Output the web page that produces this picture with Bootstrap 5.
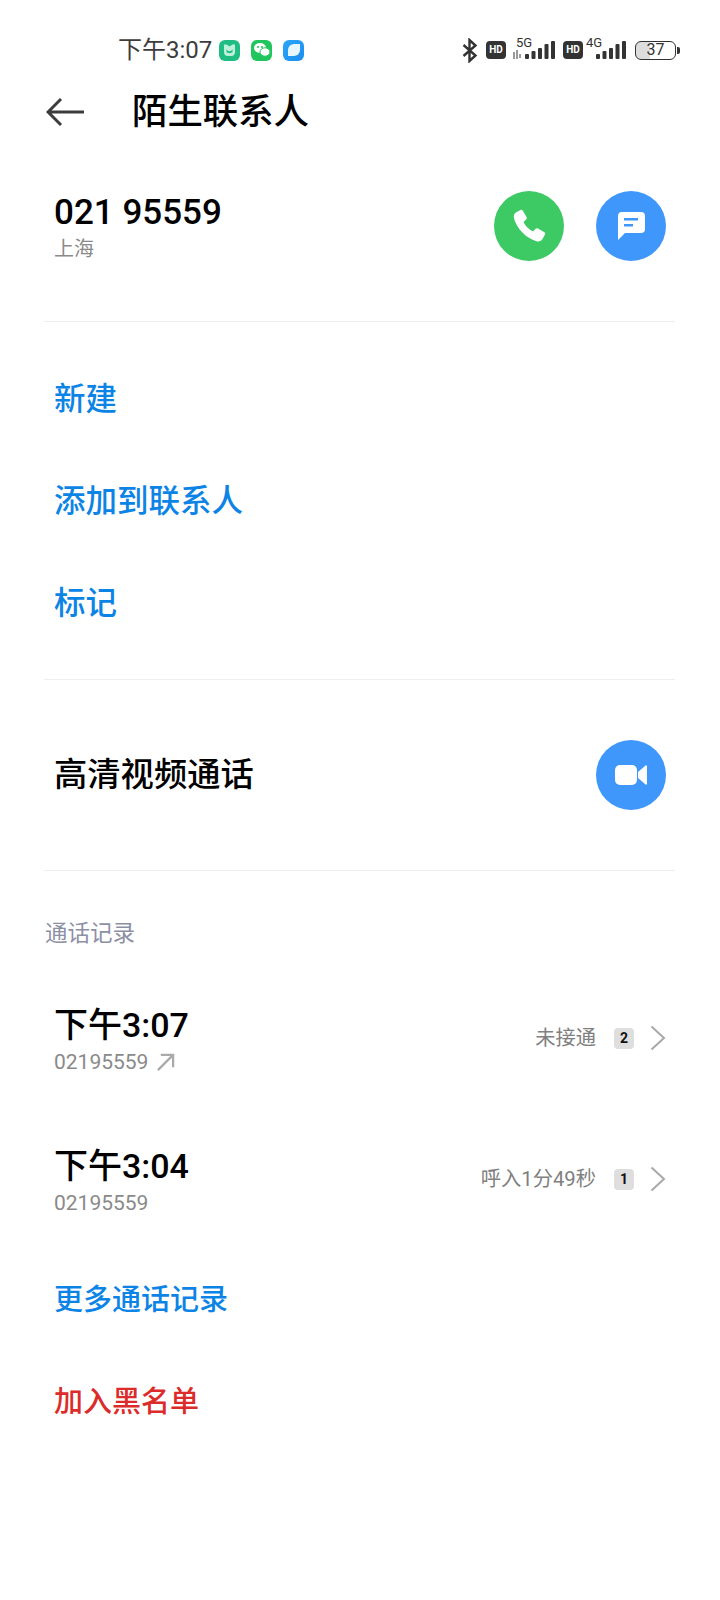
<!DOCTYPE html>
<html lang="zh">
  <head>
    <meta charset="utf-8" />
    <title>陌生联系人</title>
    <link href="https://cdn.jsdelivr.net/npm/bootstrap@5.3.0/dist/css/bootstrap.min.css" rel="stylesheet" />
    <style>
      body {
        background: #fff;
        color: #000;
        font-family: "Roboto", "Noto Sans CJK SC", sans-serif;
        width: 720px;
        height: 1600px;
        overflow: hidden;
      }
      .status-row { height: 76px; padding: 24px 40px 0 118px; }
      .status-time { font-size: 24px; line-height: 52px; color: #3c3c3c; }
      .app-dot { width: 21px; height: 21px; border-radius: 6px; }
      .app-mi { background: #1fbd82; margin-left: 7px; }
      .app-wx { background: #20c65d; margin-left: 11px; }
      .app-msg { background: linear-gradient(135deg, #2aa6f8, #1b8cf0); margin-left: 11px; }
      .hd-tag {
        width: 20px; height: 18px; border-radius: 4px; background: #333;
        color: #fff; font-size: 10px; font-weight: 700; line-height: 18px; text-align: center;
      }
      .hd-one { margin-left: 8px; }
      .hd-two { margin-left: 8px; }
      .sig-wrap { position: relative; height: 24px; }
      .sig-five { width: 42px; margin-left: 7px; }
      .sig-four { width: 40px; margin-left: 3px; }
      .sig-label { position: absolute; top: -2px; font-size: 13px; line-height: 14px; color: #333; }
      .sig-five .sig-label { left: 3px; }
      .sig-four .sig-label { left: 0; }
      .sig-bars { position: absolute; right: 0; bottom: 3px; }
      .batt {
        width: 41px; height: 19px; border: 1.5px solid #333; border-radius: 6px; margin-left: 9px;
        font-size: 16px; line-height: 16px; text-align: center; color: #333;
        background: linear-gradient(90deg, #ddd 37%, #fff 37%);
      }
      .batt-tip { width: 3px; height: 7px; background: #333; border-radius: 0 2px 2px 0; margin-left: 1px; }

      .top-row { height: 72px; padding-left: 46px; }
      .page-title { font-size: 35.4px; font-weight: 500; margin-left: 46px; line-height: 72px; }

      .num-row { height: 173px; padding: 42px 54px 0 54px; }
      .num-main { font-size: 35px; font-weight: 500; line-height: 46px; }
      .num-city { font-size: 20px; line-height: 26px; color: #8a8a8a; }
      .round-btn {
        width: 70px; height: 70px; border-radius: 50%; flex: none;
        display: flex; align-items: center; justify-content: center;
      }
      .round-green { background: #3dc964; }
      .round-blue { background: #3f97fb; }
      .num-actions { gap: 32px; margin-top: 1px; }

      .line-sep { height: 1px; background: #eeeeee; margin: 0 45px 0 44px; }
      .action-group { padding: 27px 0 24px; }
      .action-link { height: 102px; line-height: 102px; padding-left: 54px; font-size: 31.5px; font-weight: 500; color: #0c84e6; }
      .video-row { height: 190px; padding: 0 54px; font-size: 33.3px; font-weight: 500; }

      .log-head { height: 76px; padding: 46px 0 0 45px; font-size: 22.5px; line-height: 33px; color: #8d8fa5; }
      .log-row { height: 137px; padding: 55px 54px 0 54px; }
      .log-row.log-first { height: 141px; }
      .log-time { font-size: 34px; font-weight: 500; line-height: 46px; }
      .log-num { font-size: 21px; line-height: 28px; color: #8a8a8a; }
      .log-right { font-size: 20.3px; color: #808080; height: 72px; }
      .count-chip {
        width: 20px; height: 21px; border-radius: 4px; background: #dedede; color: #111;
        font-size: 14px; font-weight: 700; line-height: 21px; text-align: center; margin: 0 16px 0 18px;
      }
      .more-link { height: 102px; line-height: 102px; padding-left: 54px; font-size: 29px; font-weight: 500; }
      .more-blue { color: #0c84e6; margin-top: 24px; }
      .more-red { color: #dc2b2b; }
    </style>
  </head>
  <body>
    <div class="status-row d-flex align-items-center">
      <span class="status-time">下午3:07</span>
      <span class="app-dot app-mi d-flex align-items-center justify-content-center">
        <svg width="13" height="14" viewBox="0 0 13 14"><path d="M1 1.500h2.500l3 2 3-2H12v8a4 4 0 0 1-4 3.500H5a4 4 0 0 1-4-3.500z" fill="#bff0dc"/><path d="M3.500 6c1 3 5 3 6 0v3c-1 1.500-5 1.500-6 0z" fill="#1fbd82"/></svg>
      </span>
      <span class="app-dot app-wx d-flex align-items-center justify-content-center">
        <svg width="18" height="16" viewBox="0 0 18 16"><ellipse cx="7" cy="6" rx="6" ry="5" fill="#fff"/><ellipse cx="12" cy="10" rx="5" ry="4.200" fill="#fff" stroke="#20c65d" stroke-width="1"/><circle cx="5" cy="5" r="1" fill="#20c65d"/><circle cx="9" cy="5" r="1" fill="#20c65d"/></svg>
      </span>
      <span class="app-dot app-msg d-flex align-items-center justify-content-center">
        <svg width="14" height="14" viewBox="0 0 14 14"><path d="M7 1h6v6a6 6 0 0 1-6 6H1V7a6 6 0 0 1 6-6z" fill="#e8f6ff"/></svg>
      </span>
      <span class="ms-auto d-flex align-items-center">
        <svg width="16" height="25" viewBox="0 0 16 25" fill="none" stroke="#333" stroke-width="2.400"><path d="M1.500 7l12 10.500L7.500 23V2l6 5.500L1.500 18"/></svg>
        <span class="hd-tag hd-one">HD</span>
        <span class="sig-wrap sig-five">
          <span class="sig-label">5G</span>
          <svg class="sig-bars" width="42" height="18" viewBox="0 0 42 18" fill="#333"><rect x="0" y="11" width="2" height="7" fill="#999"/><rect x="3" y="9" width="2" height="9" fill="#999"/><rect x="6" y="13" width="2" height="4" fill="#999"/><rect x="12" y="13" width="4" height="5" rx="1"/><rect x="18.500" y="10" width="4" height="8" rx="1"/><rect x="25" y="7" width="4" height="11" rx="1"/><rect x="31.500" y="3" width="4" height="15" rx="1"/><rect x="38" y="0" width="4" height="18" rx="1"/></svg>
        </span>
        <span class="hd-tag hd-two">HD</span>
        <span class="sig-wrap sig-four">
          <span class="sig-label">4G</span>
          <svg class="sig-bars" width="30" height="18" viewBox="0 0 30 18" fill="#333"><rect x="0" y="13" width="4" height="5" rx="1"/><rect x="6.500" y="10" width="4" height="8" rx="1"/><rect x="13" y="7" width="4" height="11" rx="1"/><rect x="19.500" y="3" width="4" height="15" rx="1"/><rect x="26" y="0" width="4" height="18" rx="1"/></svg>
        </span>
        <span class="batt">37</span><span class="batt-tip"></span>
      </span>
    </div>

    <div class="top-row d-flex align-items-center">
      <svg width="40" height="30" viewBox="0 0 40 30" fill="none" stroke="#3c3c3c" stroke-width="3"><path d="M38 15H2M15 2L2 15l13 13"/></svg>
      <span class="page-title">陌生联系人</span>
    </div>

    <div class="num-row d-flex justify-content-between align-items-start">
      <div>
        <div class="num-main">021 95559</div>
        <div class="num-city">上海</div>
      </div>
      <div class="num-actions d-flex">
        <span class="round-btn round-green">
          <svg width="36" height="36" viewBox="0 0 36 36"><path d="M5 4.500L9.500 2c1-.5 2 0 2.500 1l3.500 6c.5 1 .3 2-.5 2.700L12.500 14c1.800 4 5.500 7.500 9.500 9.500l2.300-2.500c.7-.8 1.700-1 2.700-.5l6 3.500c1 .5 1.500 1.500 1 2.500L31.500 31c-1 2-3.500 3-6 2.300C15 30 6 21 3 10.500 2.500 8 3 5.700 5 4.500z" fill="#fff"/></svg>
        </span>
        <span class="round-btn round-blue">
          <svg width="30" height="30" viewBox="0 0 30 30"><path d="M5 1h20a4 4 0 0 1 4 4v13a4 4 0 0 1-4 4H9l-7 7V5a4 4 0 0 1 3-4z" fill="#fff"/><rect x="8" y="7" width="14" height="2.500" fill="#3f97fb"/><rect x="8" y="13" width="9" height="2.500" fill="#3f97fb"/></svg>
        </span>
      </div>
    </div>

    <div class="line-sep"></div>

    <div class="action-group">
      <div class="action-link">新建</div>
      <div class="action-link">添加到联系人</div>
      <div class="action-link">标记</div>
    </div>

    <div class="line-sep"></div>

    <div class="video-row d-flex justify-content-between align-items-center">
      <span>高清视频通话</span>
      <span class="round-btn round-blue">
        <svg width="32" height="22" viewBox="0 0 32 22"><rect x="0" y="1" width="22" height="20" rx="5" fill="#fff"/><path d="M23 8l7-6a1 1 0 0 1 2 1v16a1 1 0 0 1-2 1l-7-6z" fill="#fff"/></svg>
      </span>
    </div>

    <div class="line-sep"></div>

    <div class="log-head">通话记录</div>

    <div class="log-row log-first d-flex justify-content-between align-items-start">
      <div>
        <div class="log-time">下午3:07</div>
        <div class="log-num d-flex align-items-center">02195559
          <svg class="ms-2" width="19" height="19" viewBox="0 0 20 20" fill="none" stroke="#aaaaaa" stroke-width="2.400"><path d="M2 18L18 2M5 2h13v13"/></svg>
        </div>
      </div>
      <div class="log-right d-flex align-items-center">
        <span>未接通</span>
        <span class="count-chip">2</span>
        <svg width="16" height="26" viewBox="0 0 16 26" fill="none" stroke="#a8a8a8" stroke-width="2"><path d="M1.500 1.500L14 13 1.500 24.500"/></svg>
      </div>
    </div>

    <div class="log-row d-flex justify-content-between align-items-start">
      <div>
        <div class="log-time">下午3:04</div>
        <div class="log-num">02195559</div>
      </div>
      <div class="log-right d-flex align-items-center">
        <span>呼入1分49秒</span>
        <span class="count-chip">1</span>
        <svg width="16" height="26" viewBox="0 0 16 26" fill="none" stroke="#a8a8a8" stroke-width="2"><path d="M1.500 1.500L14 13 1.500 24.500"/></svg>
      </div>
    </div>

    <div class="more-link more-blue">更多通话记录</div>
    <div class="more-link more-red">加入黑名单</div>

    <script src="https://cdn.jsdelivr.net/npm/bootstrap@5.3.0/dist/js/bootstrap.bundle.min.js"></script>
  </body>
</html>
